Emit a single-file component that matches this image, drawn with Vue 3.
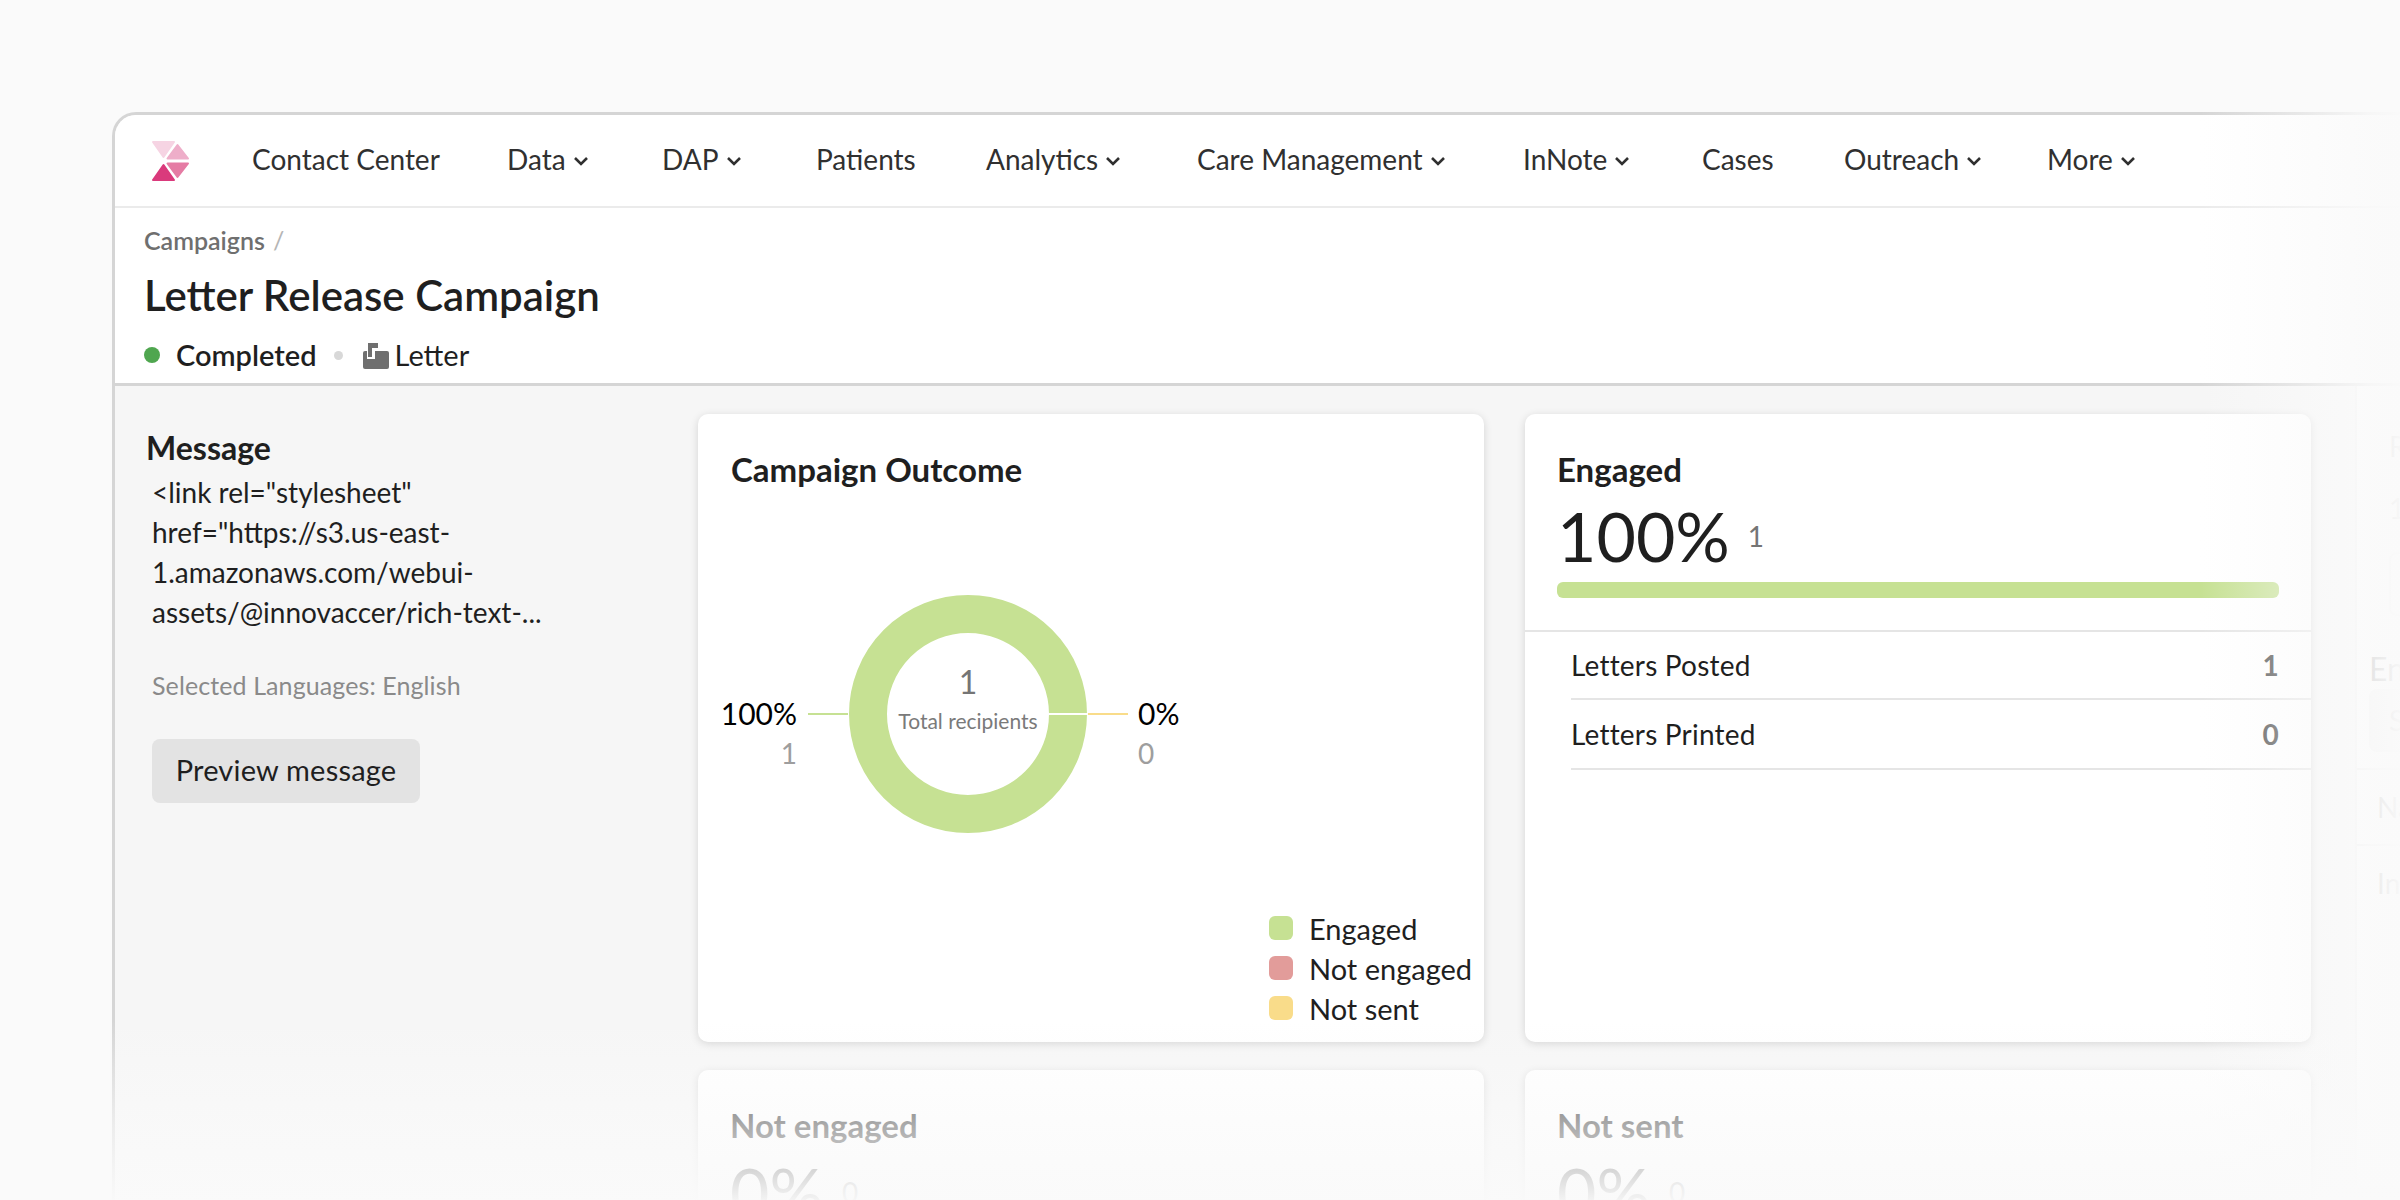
<script setup>
const navItems = [
  { label: 'Contact Center', caret: false, width: 255 },
  { label: 'Data', caret: true, width: 155 },
  { label: 'DAP', caret: true, width: 154 },
  { label: 'Patients', caret: false, width: 170 },
  { label: 'Analytics', caret: true, width: 211 },
  { label: 'Care Management', caret: true, width: 326 },
  { label: 'InNote', caret: true, width: 179 },
  { label: 'Cases', caret: false, width: 142 },
  { label: 'Outreach', caret: true, width: 203 },
  { label: 'More', caret: true, width: 120 }
]
const legend = [
  { label: 'Engaged', color: '#c6e193' },
  { label: 'Not engaged', color: '#e29c9a' },
  { label: 'Not sent', color: '#f9dc8a' }
]
const rows = [
  { label: 'Letters Posted', value: 1 },
  { label: 'Letters Printed', value: 0 }
]
</script>

<template>
  <div class="stage">
    <div class="window">
      <nav class="nav">
        <svg class="logo" viewBox="150 138 42 44" width="42" height="44">
          <g stroke-width="2" stroke-linejoin="round">
            <path d="M153 141H174L163.5 156Z" fill="#f6d4e3" stroke="#f6d4e3" />
            <path d="M177.5 144L188 157.5H167.5Z" fill="#eeaec9" stroke="#eeaec9" />
            <path d="M167.5 162.5H188L177.5 176Z" fill="#e57ca4" stroke="#e57ca4" />
            <path d="M163.5 164L174 179H153Z" fill="#da3a7c" stroke="#da3a7c" />
          </g>
        </svg>
        <ul class="menu">
          <li v-for="item in navItems" :key="item.label" class="menu-item" :style="{ width: item.width + 'px' }">
            <span>{{ item.label }}</span>
            <svg v-if="item.caret" class="caret" viewBox="0 0 16 12" width="16" height="12">
              <path d="M2 3L8 9L14 3" fill="none" stroke="#303030" stroke-width="2.6" />
            </svg>
          </li>
        </ul>
      </nav>

      <header class="head">
        <div class="crumb">Campaigns <span class="slash">/</span></div>
        <h1 class="title">Letter Release Campaign</h1>
        <div class="status">
          <span class="dot"></span>
          <span class="status-text">Completed</span>
          <span class="sep"></span>
          <svg class="letter-icon" viewBox="0 0 26 26" width="26" height="26">
            <rect x="0" y="8" width="26" height="18" rx="2" fill="#6f6f6f" />
            <rect x="4" y="4" width="8" height="12" fill="#fff" />
            <path d="M5 0H15V5H9V14H5Z" fill="#6f6f6f" />
          </svg>
          <span class="status-kind">Letter</span>
        </div>
      </header>

      <div class="body">
        <aside class="message">
          <h2 class="message-title">Message</h2>
          <p class="message-text">&lt;link rel="stylesheet"<br />href="https://s3.us-east-<br />1.amazonaws.com/webui-<br />assets/@innovaccer/rich-text-...</p>
          <p class="languages">Selected Languages: English</p>
          <button class="preview">Preview message</button>
        </aside>

        <main class="cards">
          <section class="card outcome">
            <h3 class="card-title">Campaign Outcome</h3>
            <div class="donut">
              <svg class="donut-svg" viewBox="0 0 238 238" width="238" height="238">
                <circle cx="119" cy="119" r="100" fill="none" stroke="#c6e193" stroke-width="38" />
                <rect x="200" y="118" width="38" height="2" fill="#fff" />
              </svg>
              <div class="donut-center">
                <span class="center-num">1</span>
                <span class="center-label">Total recipients</span>
              </div>
              <div class="callout left">
                <span class="pct">100%</span>
                <span class="cnt">1</span>
              </div>
              <span class="tick tick-left"></span>
              <span class="tick tick-right"></span>
              <div class="callout right">
                <span class="pct">0%</span>
                <span class="cnt">0</span>
              </div>
            </div>
            <ul class="legend">
              <li v-for="l in legend" :key="l.label" class="legend-row">
                <span class="swatch" :style="{ background: l.color }"></span>
                <span>{{ l.label }}</span>
              </li>
            </ul>
          </section>

          <section class="card">
            <div class="stat">
              <h3 class="card-title">Engaged</h3>
              <div class="figure"><span class="big">100%</span><span class="small">1</span></div>
              <div class="bar"></div>
            </div>
            <ul class="rows">
              <li v-for="r in rows" :key="r.label" class="row">
                <span>{{ r.label }}</span>
                <b class="row-value">{{ r.value }}</b>
              </li>
            </ul>
          </section>

          <section class="card">
            <div class="stat">
              <h3 class="card-title">Not engaged</h3>
              <div class="figure"><span class="big">0%</span><span class="small">0</span></div>
            </div>
          </section>

          <section class="card">
            <div class="stat">
              <h3 class="card-title">Not sent</h3>
              <div class="figure"><span class="big">0%</span><span class="small">0</span></div>
            </div>
          </section>
        </main>

        <aside class="side">
          <div class="side-top">
            <div class="side-name">Reminder</div>
            <div class="side-num">1</div>
            <div class="side-outline"></div>
          </div>
          <div class="side-label">Engagement</div>
          <div class="side-input">Select</div>
          <div class="side-row first">Name</div>
          <div class="side-row">Info</div>
        </aside>
      </div>
    </div>
    <div class="fade fade-right"></div>
    <div class="fade fade-bottom"></div>
  </div>
</template>

<style>
html, body { margin: 0; background: #fafafa; overflow: hidden; }
</style>

<style scoped>
.stage {
  position: relative;
  width: 2400px;
  height: 1200px;
  overflow: hidden;
  background: #fafafa;
  font-family: Lato, "Noto Sans", sans-serif;
  font-size: 28px;
  color: #1f1f1f;
  padding: 112px 0 0 112px;
  box-sizing: border-box;
}
.window {
  width: 2400px;
  height: 1200px;
  background: #f6f6f6;
  border: 3px solid #d5d5d5;
  border-right: 0;
  border-radius: 24px 0 0 0;
  box-sizing: border-box;
  overflow: hidden;
}
.nav {
  display: flex;
  align-items: center;
  height: 91px;
  background: #fff;
  border-bottom: 2px solid #ebebeb;
  padding-left: 35px;
}
.logo { flex: none; }
.menu {
  display: flex;
  list-style: none;
  margin: -3px 0 0 60px;
  padding: 0;
  color: #303030;
}
.menu-item {
  display: flex;
  align-items: center;
  gap: 7px;
  line-height: 40px;
  flex: none;
}
.caret { margin-top: 3px; }
.head {
  background: #fff;
  border-bottom: 3px solid #d5d5d5;
  padding: 16px 0 0 29px;
  height: 159px;
}
.crumb {
  font-size: 25px;
  font-weight: 600;
  color: #6f6f6f;
  line-height: 32px;
}
.slash { font-weight: 400; color: #b5b5b5; margin-left: 2px; }
.title {
  margin: 11px 0 0;
  font-size: 42px;
  font-weight: 600;
  line-height: 56px;
  color: #1f1f1f;
}
.status {
  display: flex;
  align-items: center;
  margin-top: 12px;
  line-height: 40px;
}
.dot { width: 16px; height: 16px; border-radius: 50%; background: #4fa64f; margin-right: 16px; }
.status-text { font-weight: 600; font-size: 29px; }
.status-kind { font-size: 29px; }
.sep { width: 9px; height: 9px; border-radius: 50%; background: #d8d8d8; margin: 0 20px 0 17px; }
.letter-icon { margin-right: 6px; margin-top: 1px; }
.body { display: flex; align-items: flex-start; }
.message {
  flex: none;
  width: 583px;
  padding: 42px 0 0 31px;
  box-sizing: border-box;
}
.message-title {
  margin: 0;
  font-size: 32px;
  font-weight: 700;
  line-height: 40px;
}
.message-text {
  margin: 4px 0 0 6px;
  line-height: 40px;
  font-size: 28px;
}
.languages {
  margin: 37px 0 0 6px;
  font-size: 25px;
  letter-spacing: 0.1px;
  line-height: 32px;
  color: #8a8a8a;
}
.preview {
  display: block;
  margin: 38px 0 0 6px;
  width: 268px;
  height: 64px;
  border: 0;
  border-radius: 8px;
  background: #e3e3e3;
  color: #1f1f1f;
  font: inherit;
  font-size: 29px;
  letter-spacing: 0.2px;
  padding: 0 0 4px;
}
.cards {
  flex: none;
  display: grid;
  grid-template-columns: 786px 786px;
  grid-auto-rows: 628px;
  gap: 28px 41px;
  padding-top: 28px;
}
.card {
  position: relative;
  background: #fff;
  border-radius: 10px;
  box-shadow: 0 2px 8px rgba(0, 0, 0, 0.14);
  overflow: hidden;
}
.card-title {
  margin: 0;
  font-size: 33px;
  font-weight: 700;
  line-height: 44px;
}
.outcome { padding: 33px 0 0 33px; box-sizing: border-box; }
.donut {
  position: absolute;
  left: 151px;
  top: 181px;
  width: 238px;
  height: 238px;
}
.donut-svg { display: block; }
.donut-center {
  position: absolute;
  inset: 0;
  display: flex;
  flex-direction: column;
  align-items: center;
  padding-top: 67px;
  box-sizing: border-box;
}
.center-num { font-size: 32px; line-height: 40px; color: #757575; }
.center-label { font-size: 21px; line-height: 28px; color: #7a7a7a; margin-top: 5px; }
.callout {
  position: absolute;
  top: 98px;
  display: flex;
  flex-direction: column;
  line-height: 40px;
  color: #000;
}
.callout.left { right: 290px; align-items: flex-end; }
.callout.right { left: 289px; align-items: flex-start; }
.pct { font-size: 30px; }
.cnt { color: #9e9e9e; }
.tick { position: absolute; top: 118px; width: 40px; height: 2px; }
.tick-left { left: -41px; background: #c6e193; }
.tick-right { left: 239px; background: #f9dc8a; }
.legend {
  position: absolute;
  left: 571px;
  top: 494px;
  list-style: none;
  margin: 0;
  padding: 0;
  font-size: 29px;
}
.legend-row {
  display: flex;
  align-items: center;
  height: 40px;
  gap: 16px;
  white-space: nowrap;
}
.swatch { width: 24px; height: 24px; border-radius: 6px; }
.stat { padding: 33px 32px 0 32px; }
.figure {
  display: flex;
  align-items: center;
  margin-top: 9px;
  height: 72px;
}
.big { font-size: 68px; line-height: 72px; font-weight: 400; }
.small { font-size: 28px; color: #757575; margin-left: 18px; }
.bar {
  height: 16px;
  margin-top: 10px;
  border-radius: 6px;
  background: #c6e193;
}
.rows {
  list-style: none;
  margin: 32px 0 0;
  padding: 0 0 0 46px;
  border-top: 2px solid #e5e5e5;
  letter-spacing: 0.2px;
}
.row {
  display: flex;
  justify-content: space-between;
  align-items: center;
  height: 68px;
  padding-right: 32px;
  border-bottom: 2px solid #e5e5e5;
}
.row:first-child { height: 66px; }
.row-value { color: #4a4a4a; font-weight: 700; }
.side {
  flex: none;
  width: 400px;
  height: 800px;
  margin-left: 44px;
  background: #fff;
  border-left: 2px solid #ececec;
  padding-left: 12px;
  box-sizing: border-box;
  color: #555;
}
.side-top { padding: 40px 0 0 20px; }
.side-name { line-height: 40px; }
.side-num { line-height: 40px; margin-top: 22px; }
.side-outline { width: 300px; height: 60px; border: 2px solid #ddd; border-radius: 8px; margin-top: 24px; }
.side-label { font-size: 32px; line-height: 40px; margin-top: 33px; color: #1f1f1f; }
.side-input { width: 300px; height: 63px; line-height: 63px; padding-left: 20px; background: #e3e3e3; border-radius: 8px; }
.side-row { height: 74px; line-height: 74px; padding-left: 20px; margin-left: -12px; border-top: 2px solid #e5e5e5; }
.side-row.first { margin-top: 16px; }
.fade { position: absolute; pointer-events: none; }
.fade-right {
  top: 0;
  right: 0;
  bottom: 0;
  width: 200px;
  background: linear-gradient(to right, rgba(250,250,250,0) 0, rgba(250,250,250,0.4) 40%, rgba(250,250,250,0.9) 84%, rgba(250,250,250,0.98) 100%);
}
.fade-bottom {
  left: 0;
  right: 0;
  bottom: 0;
  height: 180px;
  background: linear-gradient(to bottom, rgba(250,250,250,0) 0, rgba(250,250,250,0.63) 58%, rgba(250,250,250,0.97) 100%);
}
</style>
